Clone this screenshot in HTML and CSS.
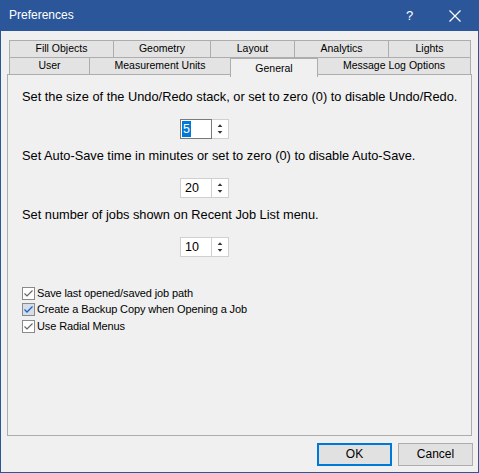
FILE: index.html
```html
<!DOCTYPE html>
<html>
<head>
<meta charset="utf-8">
<link rel="stylesheet" href="styles.css">
</head>
<body>
<div class="window">
  <div class="titlebar">
    <span class="title">Preferences</span>
    <span class="help">?</span>
    <span class="close"><svg width="12" height="12" viewBox="0 0 12 12"><path d="M0.5 0.5 L11.5 11.5 M11.5 0.5 L0.5 11.5" stroke="#fff" stroke-width="1.2" fill="none"/></svg></span>
  </div>
  <div class="body">
    <div class="tabs">
      <div class="tabrow row1">
        <div class="tab w1">Fill Objects</div>
        <div class="tab w2">Geometry</div>
        <div class="tab w3">Layout</div>
        <div class="tab w4">Analytics</div>
        <div class="tab w5">Lights</div>
      </div>
      <div class="tabrow row2">
        <div class="tab w6">User</div>
        <div class="tab w7">Measurement Units</div>
        <div class="tab w8 selected">General</div>
        <div class="tab w9">Message Log Options</div>
      </div>
      <div class="panel">
        <div class="label">Set the size of the Undo/Redo stack, or set to zero (0) to disable Undo/Redo.</div>
        <div class="spin">
          <div class="spinbox focus"><span class="sel">5</span></div>
          <div class="spinbtns"><svg width="17" height="20" viewBox="0 0 17 20"><path d="M6 8 L8.5 5 L11 8 Z M6 12 L11 12 L8.5 15 Z" fill="#333"/></svg></div>
        </div>
        <div class="label">Set Auto-Save time in minutes or set to zero (0) to disable Auto-Save.</div>
        <div class="spin">
          <div class="spinbox">20</div>
          <div class="spinbtns"><svg width="17" height="20" viewBox="0 0 17 20"><path d="M6 8 L8.5 5 L11 8 Z M6 12 L11 12 L8.5 15 Z" fill="#333"/></svg></div>
        </div>
        <div class="label">Set number of jobs shown on Recent Job List menu.</div>
        <div class="spin">
          <div class="spinbox">10</div>
          <div class="spinbtns"><svg width="17" height="20" viewBox="0 0 17 20"><path d="M6 8 L8.5 5 L11 8 Z M6 12 L11 12 L8.5 15 Z" fill="#333"/></svg></div>
        </div>
        <div class="checks">
          <div class="check"><span class="box"><svg width="11" height="11" viewBox="0 0 11 11"><path d="M1.5 5.5 L4 8 L9.5 2.5" stroke="#666" stroke-width="1.2" fill="none"/></svg></span>Save last opened/saved job path</div>
          <div class="check"><span class="box hot"><svg width="11" height="11" viewBox="0 0 11 11"><path d="M1.5 5.5 L4 8 L9.5 2.5" stroke="#1764c4" stroke-width="1.3" fill="none"/></svg></span>Create a Backup Copy when Opening a Job</div>
          <div class="check"><span class="box"><svg width="11" height="11" viewBox="0 0 11 11"><path d="M1.5 5.5 L4 8 L9.5 2.5" stroke="#666" stroke-width="1.2" fill="none"/></svg></span>Use Radial Menus</div>
        </div>
      </div>
    </div>
    <div class="buttons">
      <div class="btn default">OK</div>
      <div class="btn">Cancel</div>
    </div>
  </div>
</div>
</body>
</html>
```
FILE: styles.css
```css
html, body {
  margin: 0;
  padding: 0;
  background: #f0f0f0;
}
.window {
  width: 479px;
  height: 473px;
  box-sizing: border-box;
  border: 1px solid #2b579a;
  border-top: none;
  background: #f0f0f0;
  font-family: "Liberation Sans", Arial, sans-serif;
  font-size: 11px;
  color: #000;
  display: flex;
  flex-direction: column;
}
.titlebar {
  height: 31px;
  background: #2b579a;
  color: #fff;
  display: flex;
  align-items: center;
  flex-shrink: 0;
}
.title {
  font-family: "Liberation Sans", Arial, sans-serif;
  font-size: 12px;
  padding-left: 8px;
  flex: 1;
  padding-bottom: 1px;
}
.help {
  font-family: "Liberation Sans", Arial, sans-serif;
  font-size: 13px;
  width: 12px;
  margin-right: 31px;
}
.close {
  display: flex;
  margin-right: 17px;
}
.body {
  flex: 1;
  display: flex;
  flex-direction: column;
  padding: 9px 5px 0 6px;
}
.tabs {
  display: flex;
  flex-direction: column;
}
.tabrow {
  display: flex;
  padding-left: 2px;
  height: 18px;
}
.row2 {
  margin-top: -1px;
  position: relative;
  z-index: 1;
}
.tab {
  box-sizing: border-box;
  height: 18px;
  border: 1px solid #adadad;
  background: #e3e3e3;
  margin-right: -1px;
  text-align: center;
  line-height: 15px;
  font-size: 10.5px;
}
.w1 { width: 105px; }
.w2 { width: 98px; }
.w3 { width: 85px; }
.w4 { width: 95px; }
.w5 { width: 83px; }
.w6 { width: 81px; }
.w7 { width: 142px; }
.w8 { width: 88px; }
.w9 { width: 154px; }
.tab.selected {
  background: #f0f0f0;
  border-bottom: none;
  height: 19px;
  line-height: 19px;
  margin-top: 1px;
}
.panel {
  box-sizing: border-box;
  width: 465px;
  height: 362px;
  margin-top: -1px;
  border: 1px solid #adadad;
  background: #f0f0f0;
  padding: 14px 0 0 14px;
  font-size: 12.8px;
  line-height: 15px;
}
.label {
  height: 15px;
  white-space: nowrap;
}
.spin {
  display: flex;
  margin: 15px 0 9px 158px;
  height: 20px;
}
.spinbox {
  box-sizing: border-box;
  width: 32px;
  height: 20px;
  border: 1px solid #d0d0d0;
  background: #fff;
  padding: 1px 0 0 1px;
  line-height: 16px;
  font-size: 12.5px;
  text-indent: 3px;
}
.spinbox.focus {
  border-color: #7a7a7a;
  text-indent: 0;
}
.sel {
  display: inline-block;
  background: #0078d7;
  color: #fff;
  height: 16px;
  padding: 0 1px;
  text-indent: 0;
}
.spinbtns {
  box-sizing: border-box;
  width: 17px;
  height: 20px;
  border: 1px solid #d0d0d0;
  border-left: none;
  background: #fff;
  display: flex;
}
.spinbtns svg {
  margin-top: -1px;
}
.checks {
  margin-top: 28px;
  display: flex;
  flex-direction: column;
  font-size: 11px;
  letter-spacing: -0.12px;
}
.check {
  height: 16px;
  display: flex;
  align-items: center;
}
.check:nth-child(2) {
  height: 17px;
}
.box {
  box-sizing: border-box;
  width: 13px;
  height: 13px;
  border: 1px solid #8a8a8a;
  background: #fff;
  margin-right: 2px;
  display: flex;
  align-items: center;
  justify-content: center;
}
.box.hot {
  background: #d4dde8;
  border-color: #8a8a8a;
}
.buttons {
  display: flex;
  justify-content: flex-end;
  gap: 6px;
  margin-top: 7px;
}
.btn {
  box-sizing: border-box;
  width: 75px;
  height: 23px;
  border: 1px solid #adadad;
  background: #e1e1e1;
  text-align: center;
  line-height: 21px;
  font-size: 12px;
}
.btn.default {
  border: 2px solid #0078d7;
  line-height: 19px;
}
```
